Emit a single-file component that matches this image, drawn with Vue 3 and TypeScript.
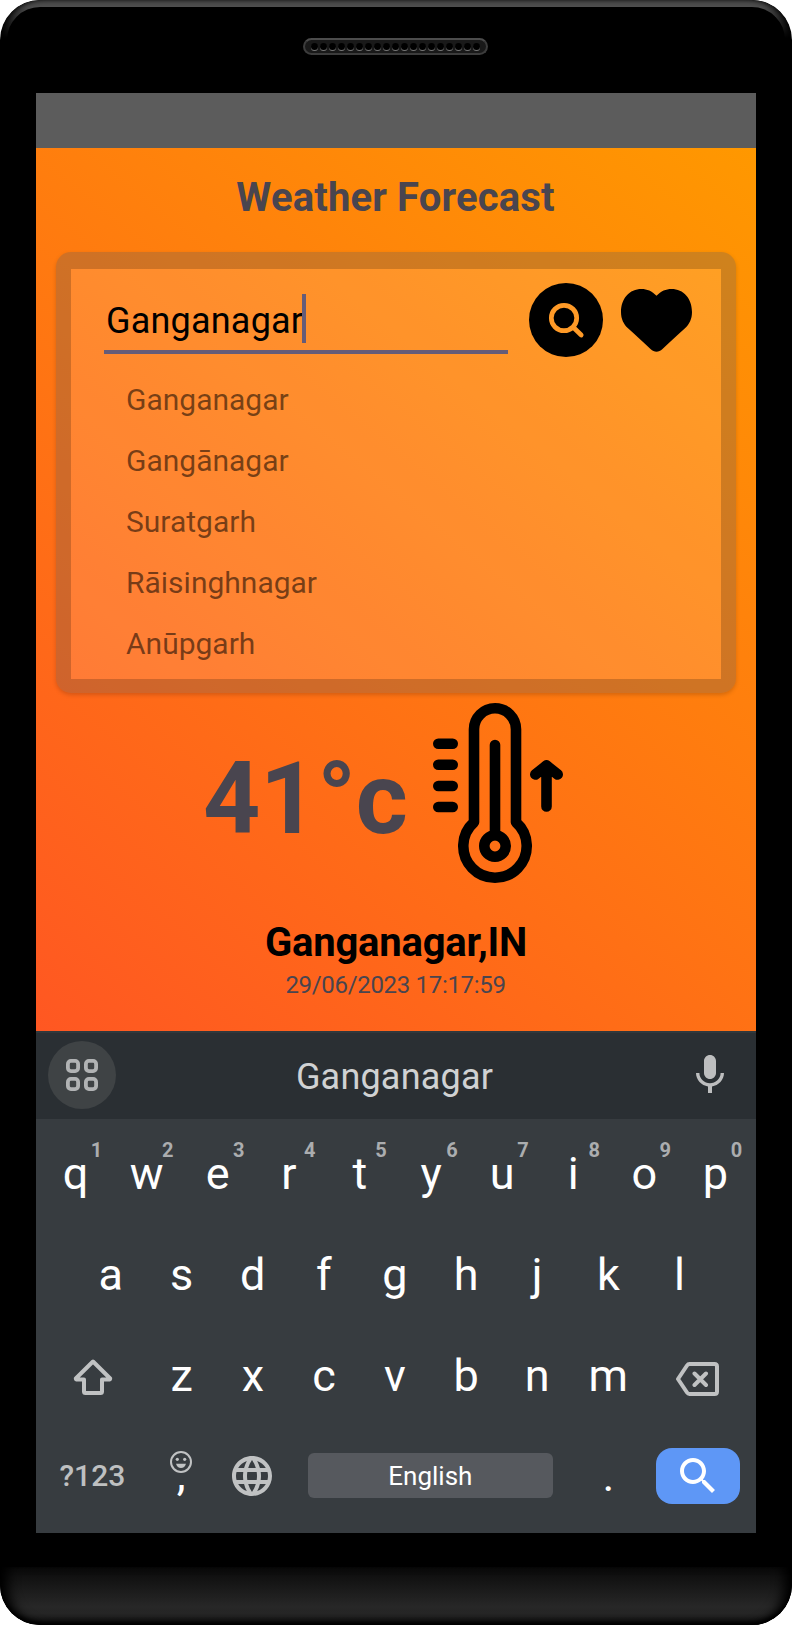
<script setup lang="ts">
interface LetterKey {
  label: string
  hint?: string
}

const suggestions: string[] = ['Ganganagar', 'Gangānagar', 'Suratgarh', 'Rāisinghnagar', 'Anūpgarh']
const topRow: LetterKey[] = [...'qwertyuiop'].map((label, i) => ({ label, hint: String((i + 1) % 10) }))
const homeRow: LetterKey[] = [...'asdfghjkl'].map((label) => ({ label }))
const bottomRow: LetterKey[] = [...'zxcvbnm'].map((label) => ({ label }))
const speakerHoles = 19
const scaleMarks: number[] = [743.7, 764.7, 786, 807]
</script>

<template>
  <div class="phone">
    <div class="rim"></div>
    <div class="speaker"><i v-for="n in speakerHoles" :key="n" class="hole"></i></div>

    <main class="screen">
      <div class="status"></div>

      <section class="app">
        <h1 class="title">Weather Forecast</h1>

        <div class="card">
          <div class="search-row">
            <div class="field"><span class="typed">Ganganagar</span><i class="caret"></i></div>
            <svg class="find" viewBox="0 0 74 74">
              <circle cx="37" cy="37" r="37" />
              <circle class="lens" cx="35" cy="35" r="12.7" />
              <path class="lens" d="M44.5 44.5 52.2 52" />
            </svg>
            <svg class="heart" viewBox="0 0 71 63">
              <path d="M35.5 6.8C31 2 26 0 20.5 0 8.500 0 0 9.500 0 23c0 7 2.500 12 7 16.300 7 6.500 14 12.700 22.500 20.700 4 3.700 8 3.700 12 0C50 52 57 45.700 64 39.300c4.500-4.300 7-9.300 7-16.300C71 9.500 62.500 0 50.500 0 45 0 40 2 35.500 6.800Z" />
            </svg>
          </div>
          <ul class="list">
            <li v-for="s in suggestions" :key="s">{{ s }}</li>
          </ul>
        </div>

        <div class="reading">
          <span class="temp">41°c</span>
          <svg class="thermo" viewBox="430 693 140 210">
            <path d="M474 822.300V729.300a21 21 0 0 1 42 0V822.300A31.700 31.700 0 1 1 474 822.300Z" />
            <path d="M495 745V835" />
            <circle cx="495" cy="846" r="10.700" />
            <path v-for="y in scaleMarks" :key="y" :d="`M438.300 ${y}H452.700`" />
            <path d="M546.500 766V806.500M535.300 774.500 546.500 765.500 557.700 774.500" />
            <path class="solid" d="M546.500 765.500 538 777H555Z" />
          </svg>
        </div>

        <div class="place">Ganganagar,IN</div>
        <div class="stamp">29/06/2023 17:17:59</div>
      </section>

      <section class="keyboard">
        <div class="strip">
          <div class="apps">
            <svg viewBox="0 0 32 32">
              <rect x="1.900" y="1.900" width="10.200" height="10.200" rx="3" />
              <rect x="19.900" y="1.900" width="10.200" height="10.200" rx="3" />
              <rect x="1.900" y="19.900" width="10.200" height="10.200" rx="3" />
              <rect x="19.900" y="19.900" width="10.200" height="10.200" rx="3" />
            </svg>
          </div>
          <span class="candidate">Ganganagar</span>
          <svg class="mic" viewBox="0 0 24 24">
            <path d="M12 14c1.660 0 3-1.340 3-3V5c0-1.660-1.340-3-3-3S9 3.340 9 5v6c0 1.660 1.340 3 3 3zm5.300-3c0 3-2.540 5.100-5.300 5.100S6.700 14 6.700 11H5c0 3.410 2.720 6.230 6 6.720V21h2v-3.280c3.280-.480 6-3.300 6-6.720h-1.700z" />
          </svg>
        </div>

        <div class="row first">
          <div v-for="k in topRow" :key="k.label" class="key">{{ k.label }}<sup class="hint">{{ k.hint }}</sup></div>
        </div>
        <div class="row">
          <div v-for="k in homeRow" :key="k.label" class="key">{{ k.label }}</div>
        </div>
        <div class="row">
          <div class="wide">
            <svg class="shift" viewBox="0 0 40 40">
              <path d="M20 4.500 2.800 21.500Q3 22.500 4.500 22.500H11V34.500Q11 36 12.500 36H27.500Q29 36 29 34.500V22.500H35.500Q37 22.500 37.200 21.500Z" />
            </svg>
          </div>
          <div v-for="k in bottomRow" :key="k.label" class="key">{{ k.label }}</div>
          <div class="wide">
            <svg class="erase" viewBox="0 0 44 34">
              <path d="M13.500 2H38.500Q41 2 41 4.500V29.500Q41 32 38.500 32H13.500Q12 32 11 30.500L2 17 11 3.500Q12 2 13.500 2ZM18.500 11.500 30 23M30 11.500 18.500 23" />
            </svg>
          </div>
        </div>
        <div class="row last">
          <div class="wide symbols">?123</div>
          <div class="key comma">
            <svg class="smile" viewBox="0 0 22 22">
              <circle class="ring" cx="11" cy="11" r="10" />
              <circle cx="7.300" cy="8.300" r="1.600" />
              <circle cx="14.700" cy="8.300" r="1.600" />
              <path d="M6 12.700H16C15.300 15.400 13.400 17 11 17S6.700 15.400 6 12.700Z" />
            </svg>
            <span>,</span>
          </div>
          <div class="key">
            <svg class="globe" viewBox="0 0 24 24">
              <path d="M11.990 2C6.470 2 2 6.480 2 12s4.470 10 9.990 10C17.520 22 22 17.520 22 12S17.520 2 11.990 2zm6.930 6h-2.950c-.320-1.250-.780-2.450-1.380-3.560 1.840.630 3.370 1.910 4.330 3.560zM12 4.040c.830 1.200 1.480 2.530 1.910 3.960h-3.820c.430-1.430 1.080-2.760 1.910-3.960zM4.260 14C4.100 13.360 4 12.690 4 12s.100-1.360.260-2h3.380c-.080.660-.140 1.320-.140 2s.060 1.340.140 2H4.260zm.820 2h2.950c.320 1.250.780 2.450 1.380 3.560-1.840-.630-3.370-1.900-4.330-3.560zm2.950-8H5.080c.960-1.660 2.490-2.930 4.330-3.560C8.810 5.550 8.350 6.750 8.030 8zM12 19.960c-.830-1.200-1.480-2.530-1.910-3.960h3.820c-.430 1.430-1.080 2.760-1.910 3.960zM14.340 14H9.660c-.090-.660-.160-1.320-.160-2s.070-1.350.160-2h4.680c.090.650.160 1.320.160 2s-.070 1.340-.160 2zm.250 5.560c.600-1.110 1.060-2.310 1.380-3.560h2.950c-.960 1.650-2.490 2.930-4.330 3.560zM16.360 14c.080-.660.140-1.320.140-2s-.060-1.340-.140-2h3.380c.160.640.260 1.310.260 2s-.100 1.360-.260 2h-3.380z" />
            </svg>
          </div>
          <div class="space">English</div>
          <div class="key period">.</div>
          <div class="enter">
            <svg viewBox="0 0 24 24">
              <path d="M15.500 14h-.790l-.280-.270C15.410 12.590 16 11.110 16 9.500 16 5.910 13.090 3 9.500 3S3 5.910 3 9.500 5.910 16 9.500 16c1.610 0 3.090-.590 4.230-1.570l.270.280v.790l5 4.990L20.490 19l-4.990-5zm-6 0C7.010 14 5 11.990 5 9.500S7.010 5 9.500 5 14 7.010 14 9.500 11.990 14 9.500 14z" />
            </svg>
          </div>
        </div>
      </section>
    </main>

    <div class="chin"></div>
  </div>
</template>

<style>
body {
  margin: 0;
  background: #fff;
}
</style>

<style scoped>
.phone {
  position: relative;
  box-sizing: border-box;
  width: 792px;
  height: 1625px;
  border-radius: 40px;
  background: #000;
  overflow: hidden;
  font-family: Roboto, "Liberation Sans", sans-serif;
  display: flex;
  flex-direction: column;
  align-items: center;
}
.rim {
  position: absolute;
  inset: 0 0 auto;
  box-sizing: border-box;
  height: 90px;
  border: 7px solid #4e4e4e;
  border-bottom: 0;
  border-radius: 40px 40px 0 0;
  -webkit-mask-image: linear-gradient(#000 7px, transparent 38px);
  mask-image: linear-gradient(#000 7px, transparent 38px);
}
.rim::after {
  content: "";
  position: absolute;
  inset: -7px -7px 0;
  border-radius: 40px 40px 0 0;
  box-shadow: inset 6px 0 6px -2px #000, inset -6px 0 6px -2px #000;
}
.speaker {
  box-sizing: border-box;
  flex: none;
  width: 185px;
  height: 17px;
  margin: 38px 1px 38px 0;
  padding: 0 6px;
  border: 2px solid #3c3c3c;
  border-top-color: #4c4c4c;
  border-radius: 9px;
  background: #191919;
  display: flex;
  align-items: center;
  justify-content: space-between;
}
.hole {
  width: 7px;
  height: 7px;
  border-radius: 50%;
  background: #000;
  box-shadow: 0 1px 0.5px #777;
}
.screen {
  flex: none;
  width: 720px;
  height: 1440px;
}
.status {
  height: 55px;
  background: #5c5c5c;
}
.app {
  height: 883px;
  background: linear-gradient(39.2deg, #ff5722, #ff9800);
  overflow: hidden;
}
.title {
  margin: 0;
  height: 104px;
  line-height: 99px;
  font-size: 40px;
  font-weight: 700;
  letter-spacing: 0.15px;
  text-align: center;
  text-indent: -1px;
  color: #49454f;
}
.card {
  box-sizing: border-box;
  height: 441px;
  margin: 0 20px;
  border: 15px solid rgba(91, 91, 91, 0.295);
  border-top-width: 17px;
  border-bottom-width: 14px;
  border-radius: 15px;
  background: rgba(255, 255, 255, 0.13) padding-box;
  box-shadow: 0 2px 4px rgba(0, 0, 0, 0.17);
}
.search-row {
  height: 100px;
  padding-left: 33px;
  display: flex;
  align-items: flex-start;
}
.field {
  box-sizing: border-box;
  width: 404px;
  height: 63px;
  margin-top: 22px;
  padding-left: 2px;
  border-bottom: 4px solid #665c78;
  display: flex;
  align-items: center;
}
.typed {
  font-size: 36px;
  letter-spacing: 0.2px;
  color: #000;
}
.caret {
  width: 4px;
  height: 49px;
  margin: 0 0 4px -1px;
  background: #665c78;
}
.find {
  width: 74px;
  height: 74px;
  margin: 14px 0 0 21px;
}
.lens {
  fill: none;
  stroke: #ff9a27;
  stroke-width: 4.7px;
  stroke-linecap: round;
}
.heart {
  width: 71px;
  height: 63px;
  margin: 20px 0 0 18px;
}
.list {
  margin: 0;
  padding: 0 0 0 55px;
  list-style: none;
  font-size: 30px;
  line-height: 61px;
  color: rgba(0, 0, 0, 0.54);
}
.reading {
  height: 210px;
  padding-left: 167px;
  display: flex;
  align-items: center;
}
.temp {
  width: 227px;
  font-size: 100px;
  font-weight: 700;
  letter-spacing: -0.3px;
  white-space: nowrap;
  color: #49454f;
}
.thermo {
  width: 140px;
  height: 210px;
  fill: none;
  stroke: #000;
  stroke-width: 10.6px;
  stroke-linecap: round;
  stroke-linejoin: round;
}
.thermo .solid {
  fill: #000;
  stroke: none;
}
.place {
  margin-top: 17px;
  line-height: 46px;
  font-size: 40px;
  font-weight: 700;
  letter-spacing: -0.2px;
  text-align: center;
  color: #000;
}
.stamp {
  margin-top: 5px;
  line-height: 28px;
  font-size: 24px;
  letter-spacing: -0.32px;
  text-align: center;
  text-indent: -1px;
  color: #49454f;
}
.keyboard {
  height: 502px;
  background: #373c40;
}
.strip {
  box-sizing: border-box;
  height: 88px;
  margin-bottom: 4px;
  padding: 0 22px 0 12px;
  border-top: 2px solid #31383c;
  background: #2a2f33;
  display: flex;
  align-items: flex-start;
}
.apps {
  width: 68px;
  height: 68px;
  margin-top: 8px;
  border-radius: 50%;
  background: #3f4345;
  display: flex;
  align-items: center;
  justify-content: center;
}
.apps svg {
  width: 32px;
  height: 32px;
  fill: none;
  stroke: #b1b3b4;
  stroke-width: 3.8px;
}
.candidate {
  flex: 1;
  padding-right: 13px;
  line-height: 89px;
  font-size: 36px;
  letter-spacing: 0.2px;
  text-align: center;
  color: #d0d2d3;
}
.mic {
  width: 48px;
  height: 48px;
  margin-top: 18px;
  fill: #bdbebf;
}
.row {
  box-sizing: border-box;
  height: 101px;
  padding-right: 2px;
  display: flex;
  justify-content: center;
  align-items: center;
}
.row.first {
  padding-right: 1px;
}
.row.last {
  padding: 0 0 2px;
}
.key {
  position: relative;
  flex: none;
  width: 71.1px;
  line-height: 101px;
  height: 101px;
  font-size: 45px;
  text-align: center;
  color: #fff;
}
.hint {
  position: absolute;
  top: 15px;
  left: 46px;
  width: 21px;
  font-size: 20px;
  font-weight: 700;
  line-height: 24px;
  color: #abadaf;
}
.wide {
  flex: none;
  width: 106.6px;
  display: flex;
  align-items: center;
  justify-content: center;
}
.shift {
  width: 40px;
  height: 40px;
  margin-top: 3px;
}
.erase {
  width: 44px;
  height: 34px;
  margin: 7px 0 0 2px;
}
.shift,
.erase {
  fill: none;
  stroke: #c0c2c3;
  stroke-width: 4px;
  stroke-linejoin: round;
}
.erase {
  stroke-linecap: round;
}
.symbols {
  margin-left: -3px;
  font-size: 30px;
  font-weight: 500;
  color: #bec0c1;
}
.comma {
  display: flex;
  flex-direction: column;
  align-items: center;
}
.smile {
  flex: none;
  width: 22px;
  height: 22px;
  margin: 26px 0 -49px;
  fill: #c0c2c3;
}
.smile .ring {
  fill: none;
  stroke: #c0c2c3;
  stroke-width: 2px;
}
.globe {
  display: block;
  width: 48px;
  height: 48px;
  margin: 27px auto;
  fill: #c0c2c3;
}
.space {
  flex: none;
  width: 245px;
  height: 45px;
  margin: 0 20px;
  border-radius: 6px;
  background: #56595e;
  font-size: 26px;
  line-height: 46px;
  text-align: center;
  color: #fff;
}
.period {
  line-height: 102px;
}
.enter {
  flex: none;
  width: 84px;
  height: 56px;
  margin: 0 10px 0 12px;
  border-radius: 16px;
  background: #5e97f6;
  display: flex;
  align-items: center;
  justify-content: center;
}
.enter svg {
  width: 48px;
  height: 48px;
  fill: #fff;
}
.chin {
  flex: none;
  width: 792px;
  height: 58px;
  margin-top: 34px;
  border-radius: 0 0 40px 40px;
  background: linear-gradient(#0a0a0a, #272727 68%, #252525 80%, #101010);
  box-shadow: inset 14px 0 12px -6px #000, inset -14px 0 12px -6px #000, inset 0 -3px 4px #000;
}
</style>
